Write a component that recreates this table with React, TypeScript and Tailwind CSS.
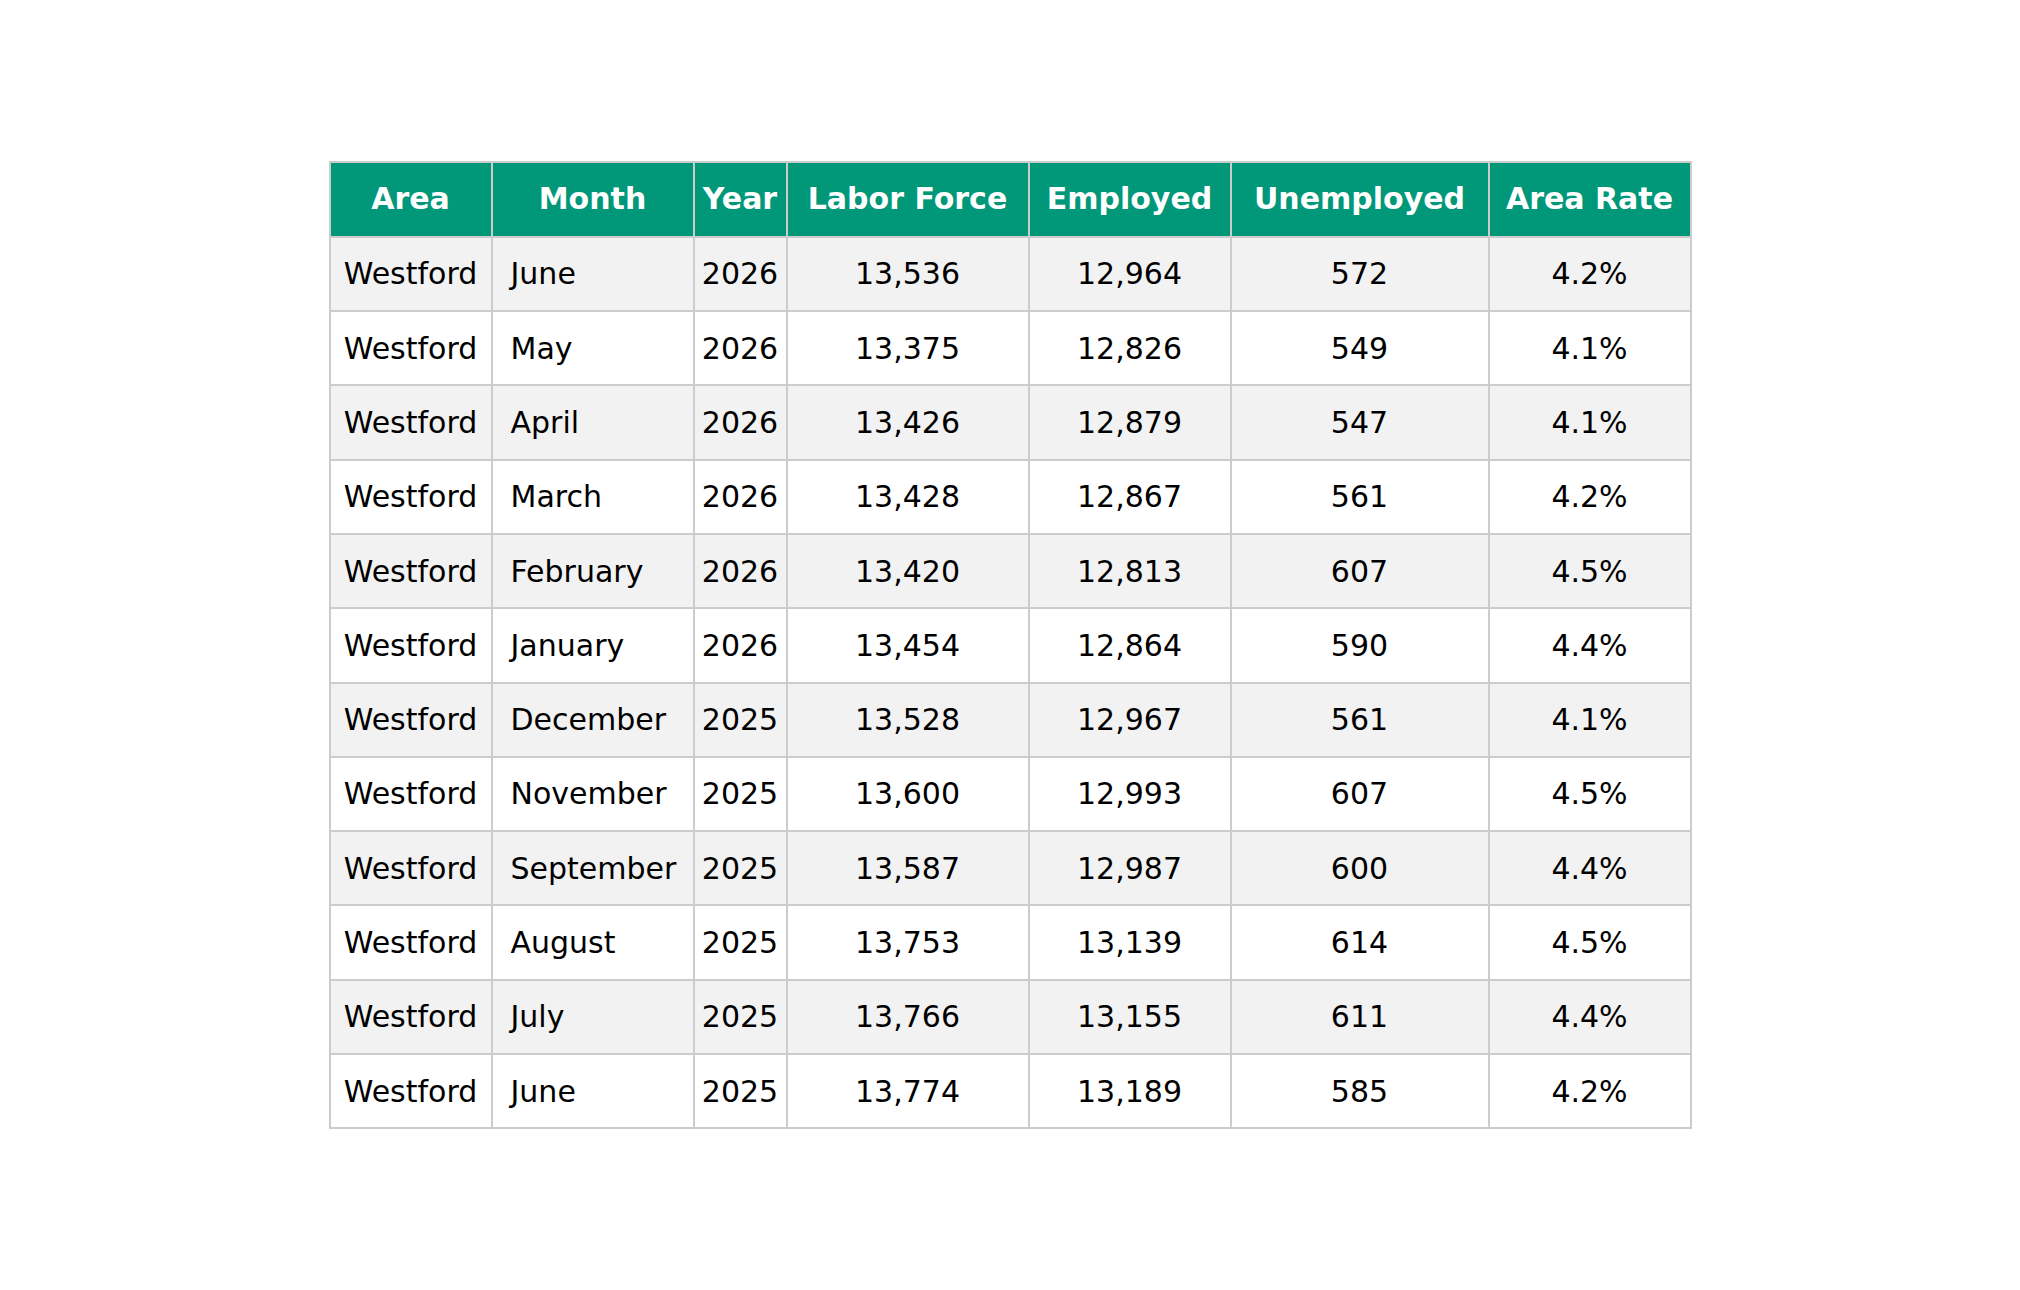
const rows = [
  ['June', '2026', '13,536', '12,964', '572', '4.2%'],
  ['May', '2026', '13,375', '12,826', '549', '4.1%'],
  ['April', '2026', '13,426', '12,879', '547', '4.1%'],
  ['March', '2026', '13,428', '12,867', '561', '4.2%'],
  ['February', '2026', '13,420', '12,813', '607', '4.5%'],
  ['January', '2026', '13,454', '12,864', '590', '4.4%'],
  ['December', '2025', '13,528', '12,967', '561', '4.1%'],
  ['November', '2025', '13,600', '12,993', '607', '4.5%'],
  ['September', '2025', '13,587', '12,987', '600', '4.4%'],
  ['August', '2025', '13,753', '13,139', '614', '4.5%'],
  ['July', '2025', '13,766', '13,155', '611', '4.4%'],
  ['June', '2025', '13,774', '13,189', '585', '4.2%'],
]

const headers = ['Area', 'Month', 'Year', 'Labor Force', 'Employed', 'Unemployed', 'Area Rate']

export default function App() {
  return (
    <div className="flex min-h-screen items-center justify-center bg-white font-['DejaVu_Sans',sans-serif]">
      <table className="w-[1363px] table-fixed border-collapse text-[30px] text-black">
        <colgroup>
          <col className="w-[162px]" />
          <col className="w-[202px]" />
          <col className="w-[93px]" />
          <col className="w-[242px]" />
          <col className="w-[202px]" />
          <col className="w-[258px]" />
          <col className="w-[202px]" />
        </colgroup>
        <thead>
          <tr className="h-[75px] bg-[#009879]">
            {headers.map((h) => (
              <th
                key={h}
                className="border-2 border-[#cccccc] px-0 pb-[2px] text-center align-middle font-bold whitespace-nowrap text-white"
              >
                {h}
              </th>
            ))}
          </tr>
        </thead>
        <tbody>
          {rows.map((r, idx) => (
            <tr key={idx} className={idx % 2 === 0 ? 'h-[74.3px] bg-[#f2f2f2]' : 'h-[74.3px] bg-white'}>
              <td className="border-2 border-[#cccccc] text-center align-middle whitespace-nowrap">Westford</td>
              <td className="border-2 border-[#cccccc] pl-[18px] text-left align-middle whitespace-nowrap">{r[0]}</td>
              <td className="border-2 border-[#cccccc] text-center align-middle whitespace-nowrap">{r[1]}</td>
              <td className="border-2 border-[#cccccc] text-center align-middle whitespace-nowrap">{r[2]}</td>
              <td className="border-2 border-[#cccccc] text-center align-middle whitespace-nowrap">{r[3]}</td>
              <td className="border-2 border-[#cccccc] text-center align-middle whitespace-nowrap">{r[4]}</td>
              <td className="border-2 border-[#cccccc] text-center align-middle whitespace-nowrap">{r[5]}</td>
            </tr>
          ))}
        </tbody>
      </table>
    </div>
  )
}
